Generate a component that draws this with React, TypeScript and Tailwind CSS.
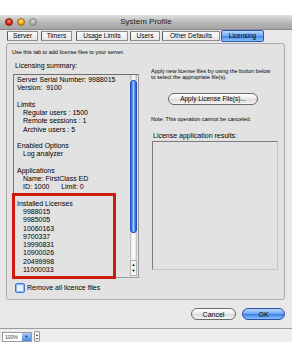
import React from "react";

const listLines: { t: string; indent?: boolean }[] = [
  { t: "Server Serial Number: 9988015" },
  { t: "Version:  9100" },
  { t: "" },
  { t: "Limits" },
  { t: "Regular users : 1500", indent: true },
  { t: "Remote sessions : 1", indent: true },
  { t: "Archive users : 5", indent: true },
  { t: "" },
  { t: "Enabled Options" },
  { t: "Log analyzer", indent: true },
  { t: "" },
  { t: "Applications" },
  { t: "Name: FirstClass ED", indent: true },
  { t: "ID: 1000      Limit: 0", indent: true },
  { t: "" },
  { t: "Installed Licenses" },
  { t: "9988015", indent: true },
  { t: "9985005", indent: true },
  { t: "10060163", indent: true },
  { t: "9700337", indent: true },
  { t: "19990831", indent: true },
  { t: "10900026", indent: true },
  { t: "20499998", indent: true },
  { t: "11000033", indent: true },
];

function Tab({ label, className }: { label: string; className: string }) {
  return (
    <div
      className={
        "h-[10px] flex items-center justify-center text-[6.5px] leading-none border border-[#8c8c8c] border-l-[#5a5a5a] rounded-[1px] bg-[linear-gradient(#fbfbfb,#e6e6e6)] " +
        className
      }
    >
      {label}
    </div>
  );
}

export default function App() {
  return (
    <div className="w-[292px] h-[342px] bg-white flex flex-col overflow-hidden text-black font-['Liberation_Sans',Arial,sans-serif]">
      <div className="h-[15px] bg-white" />
      {/* Title bar */}
      <div className="h-[15px] grid grid-cols-[1fr_auto_1fr] items-center bg-[linear-gradient(#e0e0e0,#b4b4b4_60%,#a4a4a4)] border-b border-[#8a8a8a]">
        <div className="flex items-center gap-[4px] pl-[5px]">
          <div className="w-[8px] h-[8px] rounded-full bg-[radial-gradient(circle_at_50%_35%,#ff8a7a,#d8200e_60%,#9a1206)] border border-[#8a1a10]" />
          <div className="w-[8px] h-[8px] rounded-full bg-[radial-gradient(circle_at_50%_35%,#ffe27a,#f0a010_60%,#b06a00)] border border-[#9a6a10]" />
          <div className="w-[8px] h-[8px] rounded-full bg-[radial-gradient(circle_at_50%_35%,#d8d8d8,#a8a8a8_60%,#888)] border border-[#8a8a8a]" />
        </div>
        <div className="text-[8px] leading-none text-[#222]">System Profile</div>
        <div />
      </div>
      {/* Body */}
      <div className="flex-1 flex flex-col bg-[#e8e8e8]">
        {/* Tabs */}
        <div className="h-[13px] flex items-start pt-[1px]">
          <Tab label="Server" className="ml-[7px] w-[31px]" />
          <Tab label="Timers" className="ml-[3px] w-[31px]" />
          <Tab label="Usage Limits" className="ml-[4px] w-[52px]" />
          <Tab label="Users" className="ml-[2px] w-[30px]" />
          <Tab label="Other Defaults" className="ml-[2px] w-[58px]" />
          <div className="ml-[1px] -mt-[1px] w-[43px] h-[12px] flex items-center justify-center text-[6.5px] leading-none border border-[#2a58b8] rounded-[2px] bg-[linear-gradient(#b8d8fc,#6aa6f2_50%,#4a8ae8_55%,#8cc0f8)]">
            Licensing
          </div>
        </div>
        {/* Panel */}
        <div className="ml-[6px] w-[279px] h-[257px] border border-[#acacac] rounded-[3px] bg-[#e2e2e2] flex flex-col">
          <div className="pl-[5px] pt-[5px] text-[5.5px] leading-[6px]">
            Use this tab to add license files to your server.
          </div>
          <div className="flex gap-[12px] pl-[6px]">
            {/* Left column */}
            <div className="w-[126px] flex flex-col">
              <div className="mt-[7px] pl-[2px] text-[7px] leading-[8px]">Licensing summary:</div>
              <div className="relative mt-[4px] h-[204px] border border-[#9a9a9a] border-t-[#6e6e6e] border-l-[#7a7a7a] flex">
                <div className="flex-1 pl-[3px] pt-[1px] text-[7px] leading-[8.25px] overflow-hidden">
                  {listLines.map((l, i) => (
                    <div key={i} className={"h-[8.25px] whitespace-pre " + (l.indent ? "pl-[6px]" : "")}>
                      {l.t}
                    </div>
                  ))}
                </div>
                {/* Scrollbar */}
                <div className="w-[7px] mr-[1px] flex flex-col">
                  <div className="h-[5px] bg-[linear-gradient(90deg,#d8d8d8,#fafafa,#d8d8d8)] border-x border-[#bcbcbc]" />
                  <div className="h-[153px] rounded-[3px] border border-[#2050b8] bg-[linear-gradient(90deg,#2c5ed4,#6c9ef0_35%,#a8c8fa_50%,#5e90ec_70%,#2a5ad0)]" />
                  <div className="h-[27px] border-x border-[#c4c4c4] bg-[linear-gradient(90deg,#e4e4e4,#ffffff,#e4e4e4)] rounded-b-[3px]" />
                  <div className="h-[16px] flex flex-col items-center justify-center gap-[2px] border border-[#b4b4b4] bg-[#f4f4f4] text-[4px] leading-[4px]">
                    <span>▲</span>
                    <span>▼</span>
                  </div>
                </div>
                {/* Red highlight */}
                <div className="absolute left-[-2px] top-[118px] w-[104px] h-[86px] border-[3px] border-[#d01a10]" />
              </div>
              <div className="mt-[5px] flex items-center pl-[2px] gap-[2px]">
                <div className="w-[10px] h-[10px] rounded-[2px] border border-[#3f74d4] bg-[linear-gradient(#d8e6fa,#f4f8ff)] shadow-[inset_0_0_0_1px_#8fb4ee]" />
                <span className="text-[7px] leading-[8px]">Remove all licence files</span>
              </div>
            </div>
            {/* Right column */}
            <div className="w-[128px] flex flex-col">
              <div className="mt-[13px] text-[5.5px] leading-[6px]">
                Apply new license files by using the button below
                <br />
                to select the appropriate file(s).
              </div>
              <div className="mt-[13px] ml-[17px] w-[90px] h-[12px] rounded-full border border-[#6a6a6a] bg-[linear-gradient(#ffffff,#eaeaea_50%,#dcdcdc_55%,#f4f4f4)] flex items-center justify-center text-[6.5px] leading-none">
                Apply License File(s)...
              </div>
              <div className="mt-[11px] text-[5.5px] leading-[6px]">Note: This operation cannot be canceled.</div>
              <div className="mt-[10px] pl-[2px] text-[7px] leading-[8px]">License application results:</div>
              <div className="mt-[1px] ml-[1px] w-[126px] h-[129px] border border-[#c4c4c4] border-t-[#7c7c7c] border-l-[#7c7c7c]" />
            </div>
          </div>
        </div>
        {/* Buttons */}
        <div className="mt-[8px] h-[12px] flex justify-end gap-[6px] pr-[7px]">
          <div className="w-[45px] h-[12px] rounded-full border border-[#6a6a6a] bg-[linear-gradient(#ffffff,#eaeaea_50%,#dcdcdc_55%,#f4f4f4)] flex items-center justify-center text-[7px] leading-none">
            Cancel
          </div>
          <div className="w-[43px] h-[12px] rounded-full border border-[#2a4fa8] bg-[linear-gradient(#b8d6fc,#6aa4f2_50%,#3f80e6_55%,#8ec2fa)] flex items-center justify-center text-[7px] leading-none">
            OK
          </div>
        </div>
        <div className="mt-[8px] h-[1px] bg-[#9c9c9c]" />
        {/* Bottom bar */}
        <div className="h-[13px] bg-[#ededed] flex items-end pl-[2px] gap-[2px]">
          <div className="w-[30px] h-[10px] border border-[#9a9a9a] bg-white flex items-center">
            <span className="flex-1 pl-[2px] text-[5px] leading-none text-[#333]">100%</span>
            <div className="w-[9px] h-full bg-[linear-gradient(#a8ccf8,#4a8ae8)] flex items-center justify-center text-[4px] leading-none text-[#123]">
              ▼
            </div>
          </div>
          <div className="w-[6px] h-[11px] border border-[#9a9a9a] bg-[#f6f6f6] rounded-[1px] flex flex-col items-center justify-center text-[3px] leading-[4px]">
            <span>▲</span>
            <span>▼</span>
          </div>
        </div>
      </div>
    </div>
  );
}
